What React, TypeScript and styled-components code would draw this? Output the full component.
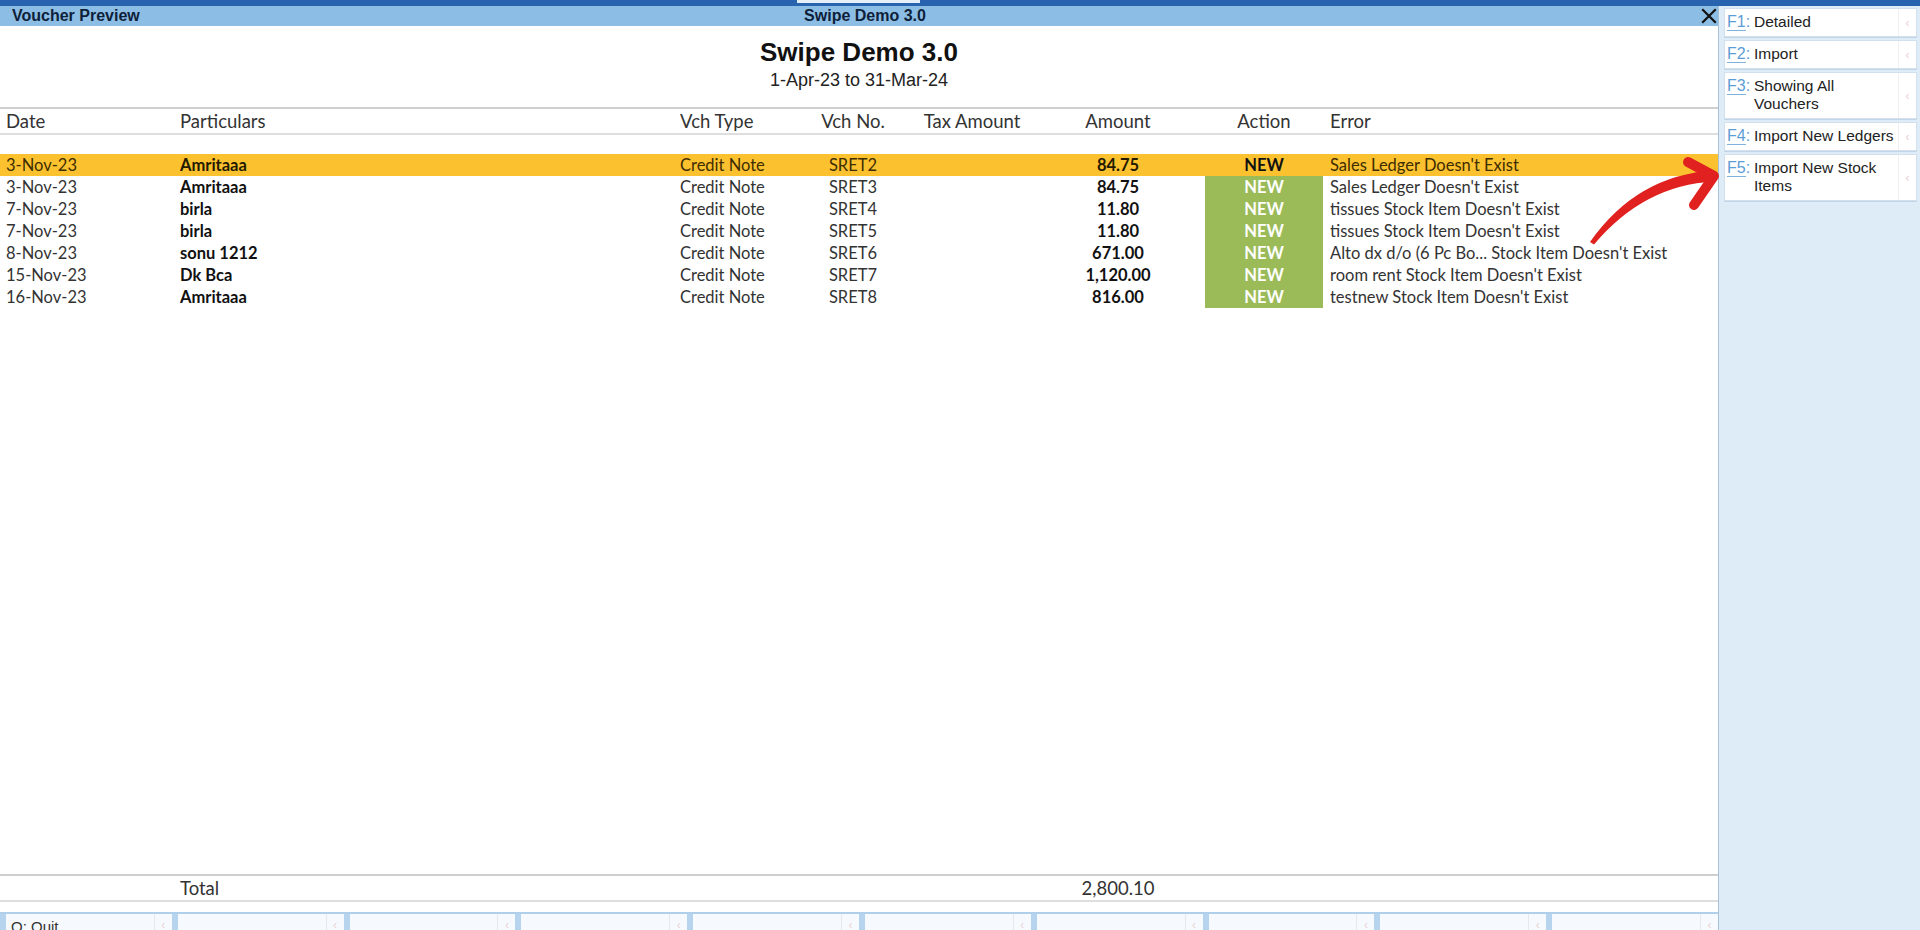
import React from 'react'
import styled, {createGlobalStyle} from 'styled-components'

type Voucher = {
  date: string
  party: string
  type: string
  no: string
  amount: string
  error: string
}

const vouchers: Voucher[] = [
  {date: '3-Nov-23', party: 'Amritaaa', type: 'Credit Note', no: 'SRET2', amount: '84.75', error: "Sales Ledger Doesn't Exist"},
  {date: '3-Nov-23', party: 'Amritaaa', type: 'Credit Note', no: 'SRET3', amount: '84.75', error: "Sales Ledger Doesn't Exist"},
  {date: '7-Nov-23', party: 'birla', type: 'Credit Note', no: 'SRET4', amount: '11.80', error: "tissues Stock Item Doesn't Exist"},
  {date: '7-Nov-23', party: 'birla', type: 'Credit Note', no: 'SRET5', amount: '11.80', error: "tissues Stock Item Doesn't Exist"},
  {date: '8-Nov-23', party: 'sonu 1212', type: 'Credit Note', no: 'SRET6', amount: '671.00', error: "Alto dx d/o (6 Pc Bo... Stock Item Doesn't Exist"},
  {date: '15-Nov-23', party: 'Dk Bca', type: 'Credit Note', no: 'SRET7', amount: '1,120.00', error: "room rent Stock Item Doesn't Exist"},
  {date: '16-Nov-23', party: 'Amritaaa', type: 'Credit Note', no: 'SRET8', amount: '816.00', error: "testnew Stock Item Doesn't Exist"},
]

const sideActions = [
  {key: 'F1', label: 'Detailed'},
  {key: 'F2', label: 'Import'},
  {key: 'F3', label: 'Showing All Vouchers'},
  {key: 'F4', label: 'Import New Ledgers'},
  {key: 'F5', label: 'Import New Stock Items'},
]

const footerKeys = ['Q: Quit', '', '', '', '', '', '', '', '', '']

const GlobalStyle = createGlobalStyle`
  html, body {
    margin: 0;
    padding: 0;
  }
  body {
    width: 1920px;
    height: 930px;
    overflow: hidden;
    background: #fff;
    font-family: 'Liberation Sans', Arial, sans-serif;
  }
  * {
    box-sizing: border-box;
  }
`

const Page = styled.div`
  position: relative;
  width: 1920px;
  height: 930px;
  display: flex;
  flex-direction: column;
  overflow: hidden;
`

const TopStrip = styled.div`
  height: 6px;
  flex-shrink: 0;
  display: flex;
  background: #2763ae;
`

const StripTab = styled.div`
  margin-left: 797px;
  width: 123px;
  height: 3px;
  background: #e6eef8;
`

const Body = styled.div`
  flex: 1;
  min-height: 0;
  display: flex;
`

const Main = styled.div`
  width: 1718px;
  flex-shrink: 0;
  display: flex;
  flex-direction: column;
  background: #fff;
`

const TitleBar = styled.div`
  height: 20px;
  flex-shrink: 0;
  display: grid;
  grid-template-columns: 1fr auto 1fr;
  align-items: center;
  padding-left: 12px;
  background: #8cbde4;
  color: #0e1f3a;
  font: bold 16px/20px 'Liberation Sans', Arial, sans-serif;
`

const CloseButton = styled.svg`
  justify-self: end;
  margin-right: 1px;
  display: block;
`

const Company = styled.div`
  padding-top: 11px;
  text-align: center;
  color: #111;
  font: bold 26px/30px 'Liberation Sans', Arial, sans-serif;
`

const Period = styled.div`
  margin-top: 3px;
  text-align: center;
  color: #222;
  font: 18px/20px 'Liberation Sans', Arial, sans-serif;
`

const columns = '180px 500px 120px 106px 132px 160px 7px 118px 1fr'

const HeaderRow = styled.div`
  margin-top: 17px;
  height: 28px;
  display: grid;
  grid-template-columns: ${columns};
  align-items: center;
  border-top: 2px solid #cfcfcf;
  border-bottom: 2px solid #dedede;
  color: #333;
  font: 18.5px/22px Lato, 'Open Sans', sans-serif;
`

const Cell = styled.div<{$align?: 'left' | 'center'; $bold?: boolean; $pad?: number}>`
  text-align: ${(p) => p.$align ?? 'left'};
  font-weight: ${(p) => (p.$bold ? 700 : 400)};
  padding-left: ${(p) => p.$pad ?? 0}px;
  white-space: nowrap;
  overflow: hidden;
`

const Rows = styled.div`
  margin-top: 19px;
  display: flex;
  flex-direction: column;
`

const Row = styled.div<{$selected?: boolean}>`
  height: 22px;
  display: grid;
  grid-template-columns: ${columns};
  align-items: stretch;
  background: ${(p) => (p.$selected ? '#fbc12f' : 'transparent')};
  color: ${(p) => (p.$selected ? '#3e2d00' : '#333')};
  font: 16.5px/22px Lato, 'Open Sans', sans-serif;
`

const Strong = styled(Cell)<{$selected?: boolean}>`
  color: ${(p) => (p.$selected ? '#241a00' : '#111')};
`

const ActionCell = styled.div<{$selected?: boolean}>`
  text-align: center;
  font-weight: 700;
  background: ${(p) => (p.$selected ? 'transparent' : '#9bbb59')};
  color: ${(p) => (p.$selected ? '#111' : '#fff')};
`

const Filler = styled.div`
  flex: 1;
`

const TotalRow = styled.div`
  height: 28px;
  display: grid;
  grid-template-columns: ${columns};
  align-items: center;
  border-top: 2px solid #cfcfcf;
  border-bottom: 2px solid #dedede;
  color: #333;
  font: 18.5px/22px Lato, 'Open Sans', sans-serif;
`

const BottomBar = styled.div`
  margin-top: 10px;
  height: 18px;
  flex-shrink: 0;
  overflow: hidden;
  display: grid;
  grid-template-columns: repeat(10, 1fr);
  align-items: start;
  background: #b6d4ee;
  border-top: 2px solid #b0cfea;
`

const FooterButton = styled.div`
  margin-left: 6px;
  height: 30px;
  display: flex;
  background: #f6faff;
`

const FooterLabel = styled.div`
  flex: 1;
  padding: 4px 5px 0;
  color: #333;
  font: 15px/18px 'Liberation Sans', Arial, sans-serif;
`

const FooterChevron = styled.div`
  width: 18px;
  border-left: 1px solid #e4e9ee;
  color: #ecd2d4;
  font: 12px/22px 'Liberation Sans', Arial, sans-serif;
  text-align: center;
`

const Side = styled.div`
  width: 202px;
  flex-shrink: 0;
  display: flex;
  flex-direction: column;
  gap: 3px;
  padding: 2px 3px 0 5px;
  background: #deecf8;
  border-left: 1px solid #a9c0d6;
`

const SideButton = styled.div`
  display: flex;
  background: #fff;
  border: 1px solid #d2e0ed;
  box-shadow: 0 1px 0 #c3d6e8;
`

const SideLabel = styled.div`
  flex: 1;
  display: flex;
  padding: 4px 2px 5px 2px;
  color: #222;
  font: 15.5px/18px 'Liberation Sans', Arial, sans-serif;
`

const SideKey = styled.span`
  width: 27px;
  flex-shrink: 0;
  color: #5c9dd6;
  font-size: 16px;
`

const KeyCode = styled.span`
  border-bottom: 1px solid #80b2df;
`

const SideChevron = styled.div`
  width: 18px;
  flex-shrink: 0;
  display: flex;
  align-items: center;
  justify-content: center;
  border-left: 1px solid #eef0f3;
  color: #ecd0d3;
  font: 12px 'Liberation Sans', Arial, sans-serif;
`

const Annotation = styled.svg`
  position: absolute;
  top: 0;
  left: 0;
  pointer-events: none;
`

export default function App() {
  return (
    <Page>
      <GlobalStyle />
      <TopStrip>
        <StripTab />
      </TopStrip>
      <Body>
        <Main>
          <TitleBar>
            <span>Voucher Preview</span>
            <span>Swipe Demo 3.0</span>
            <CloseButton width="16" height="16" viewBox="0 0 16 16">
              <path d="M2 2 L14 14 M14 2 L2 14" stroke="#111" strokeWidth="2.2" strokeLinecap="square" />
            </CloseButton>
          </TitleBar>

          <Company>Swipe Demo 3.0</Company>
          <Period>1-Apr-23 to 31-Mar-24</Period>

          <HeaderRow>
            <Cell $pad={6}>Date</Cell>
            <Cell>Particulars</Cell>
            <Cell>Vch Type</Cell>
            <Cell $align="center">Vch No.</Cell>
            <Cell $align="center">Tax Amount</Cell>
            <Cell $align="center">Amount</Cell>
            <div />
            <Cell $align="center">Action</Cell>
            <Cell $pad={7}>Error</Cell>
          </HeaderRow>

          <Rows>
            {vouchers.map((v, i) => {
              const selected = i === 0
              return (
                <Row key={v.no} $selected={selected}>
                  <Cell $pad={6}>{v.date}</Cell>
                  <Strong $bold $selected={selected}>
                    {v.party}
                  </Strong>
                  <Cell>{v.type}</Cell>
                  <Cell $align="center">{v.no}</Cell>
                  <Cell />
                  <Strong $bold $align="center" $selected={selected}>
                    {v.amount}
                  </Strong>
                  <div />
                  <ActionCell $selected={selected}>NEW</ActionCell>
                  <Cell $pad={7}>{v.error}</Cell>
                </Row>
              )
            })}
          </Rows>

          <Filler />

          <TotalRow>
            <div />
            <Cell>Total</Cell>
            <div />
            <div />
            <div />
            <Cell $align="center">2,800.10</Cell>
          </TotalRow>

          <BottomBar>
            {footerKeys.map((k, i) => (
              <FooterButton key={i}>
                <FooterLabel>{k}</FooterLabel>
                <FooterChevron>‹</FooterChevron>
              </FooterButton>
            ))}
          </BottomBar>
        </Main>

        <Side>
          {sideActions.map((a) => (
            <SideButton key={a.key}>
              <SideLabel>
                <SideKey>
                  <KeyCode>{a.key}</KeyCode>:
                </SideKey>
                <span>{a.label}</span>
              </SideLabel>
              <SideChevron>‹</SideChevron>
            </SideButton>
          ))}
        </Side>
      </Body>

      <Annotation width="1920" height="930" viewBox="0 0 1920 930">
        <path
          d="M1590 242 Q1637 175 1714 170.5 L1714 181.5 Q1644 185 1594 244.5 Z"
          fill="#e0211f"
        />
        <path
          d="M1688 162 L1714 176 L1694 205"
          fill="none"
          stroke="#e0211f"
          strokeWidth="10"
          strokeLinecap="round"
          strokeLinejoin="round"
        />
      </Annotation>
    </Page>
  )
}
